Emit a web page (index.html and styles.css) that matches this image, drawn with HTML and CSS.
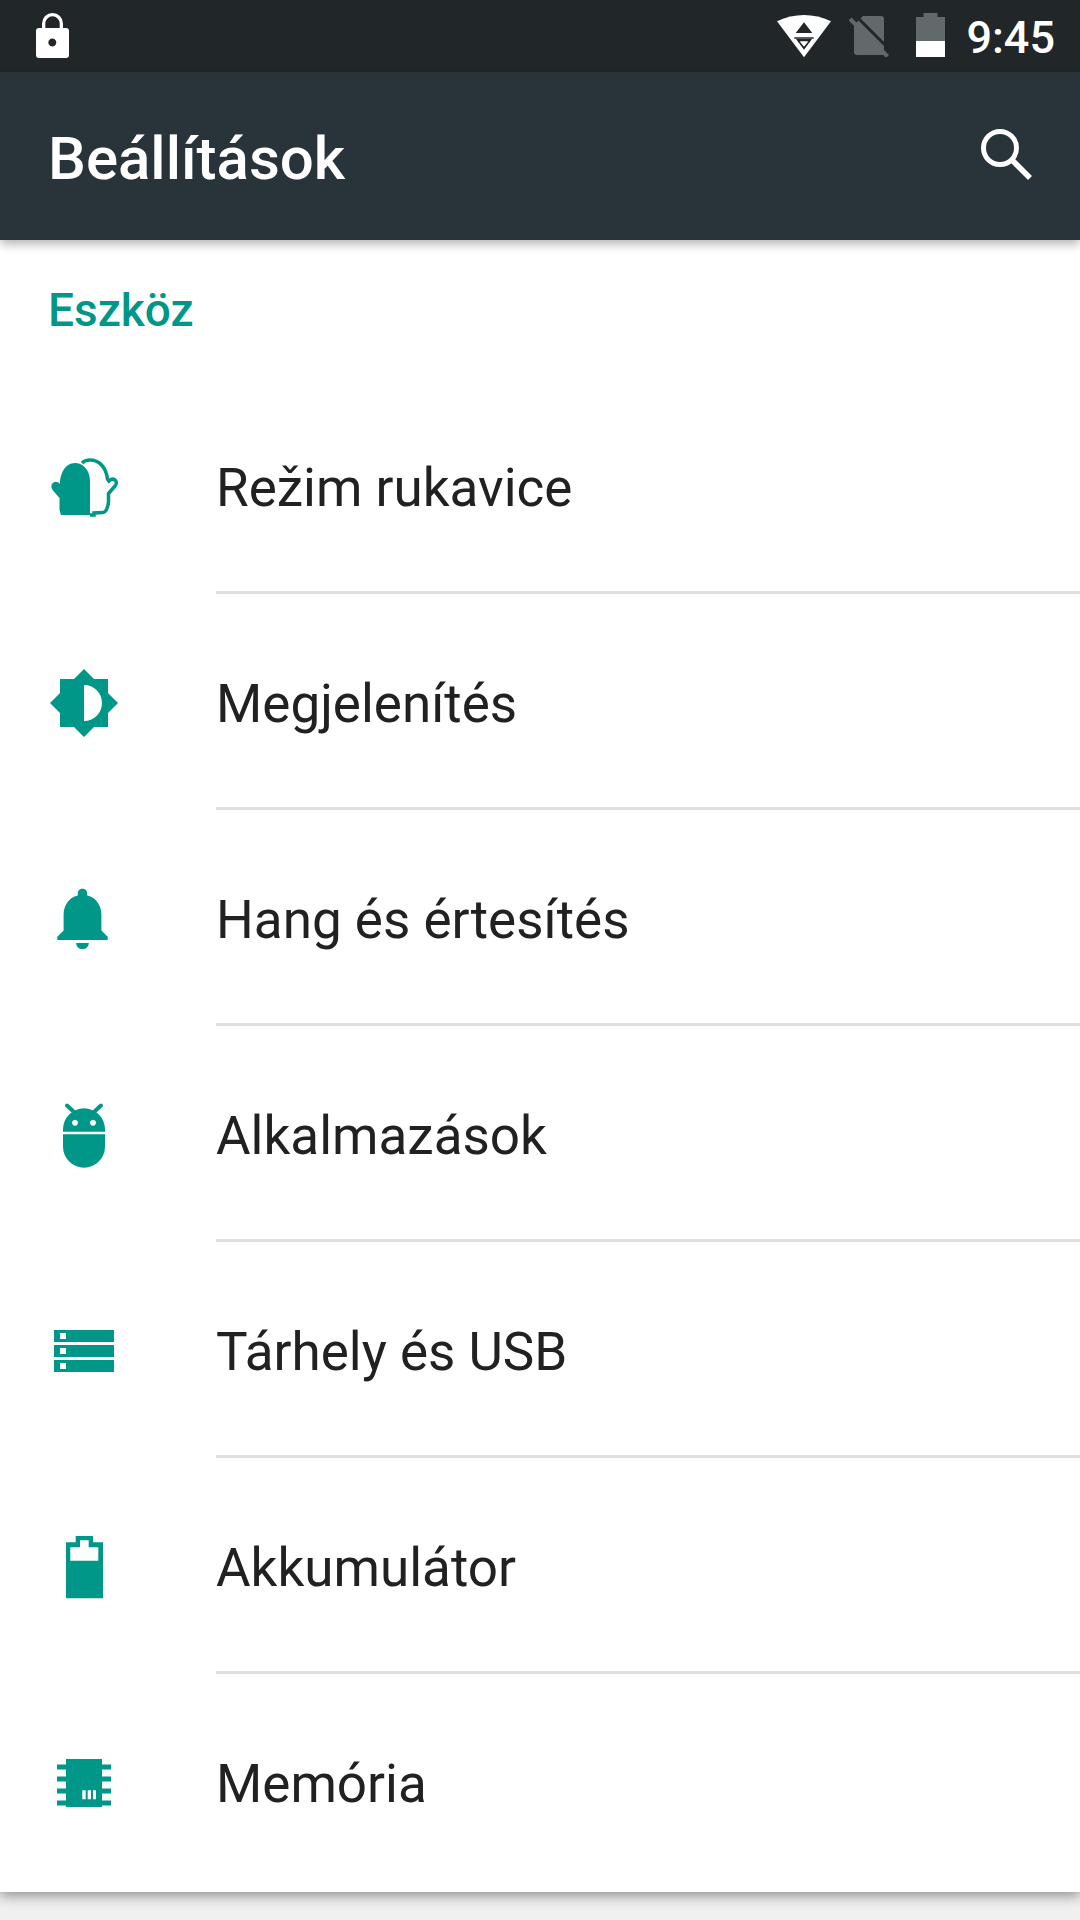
FILE: index.html
```html
<!DOCTYPE html>
<html lang="hu">
<head>
<meta charset="utf-8">
<title>Beállítások</title>
<link rel="stylesheet" href="styles.css">
</head>
<body>
<div class="phone">
  <header class="statusbar">
    <svg class="ic-lock" viewBox="0 0 33 45"><path fill="#fff" fill-rule="evenodd" d="M6 15V10.500a10.500 10.500 0 0 1 21 0V15h3a3 3 0 0 1 3 3v24a3 3 0 0 1-3 3H3a3 3 0 0 1-3-3V18a3 3 0 0 1 3-3zM9.300 15h14.400V10.500a7.200 7.200 0 0 0-14.400 0zM16.300 25.600a4 4 0 1 0 .01 0z"/></svg>
    <div class="status-right">
      <svg class="ic-wifi" viewBox="0 0 54 45"><path fill="#fff" d="M0 8.300Q27-4.300 54 8.300L27 44.300z"/><path fill="#212629" d="M27 9.300l8.300 10.700H18.700zM17.300 24.300h19.400v1.500H17.300zM19 26h16L27 36.700zM23 28.500l4 5 4-5z"/><path fill="#fff" d="M23 28.500h8L27 33.500z"/></svg>
      <svg class="ic-sim" viewBox="0 0 42 44"><path fill="#63686b" d="M14 3h18a3 3 0 0 1 3 3v33a3 3 0 0 1-3 3H8a3 3 0 0 1-3-3V12z"/><path stroke="#212629" stroke-width="3" d="M3-1L44 40"/><path stroke="#63686b" stroke-width="4" d="M1 6L38.500 43.500"/></svg>
      <svg class="ic-batt" viewBox="0 0 29 44"><path fill="#63686b" d="M7.500 0h14v4H29v24H0V4h7.500z"/><path fill="#fff" d="M0 28h29v16H0z"/></svg>
      <span class="clock">9:45</span>
    </div>
  </header>
  <div class="appbar">
    <h1 class="appbar-title">Beállítások</h1>
    <svg class="ic-search" viewBox="0 0 54 54"><circle cx="22" cy="22" r="16.500" fill="none" stroke="#fff" stroke-width="5"/><path d="M33 33L52 52" stroke="#fff" stroke-width="5.500" fill="none"/></svg>
  </div>
  <main class="content">
    <h2 class="section">Eszköz</h2>
    <ul class="list">
      <li class="row">
        <svg class="icon" viewBox="0 0 72 72"><path class="teal" d="M13 66L11.500 61V49L5 41.500C2.500 38.500 3 35 5.500 33.500C8 32 10 33 12 35C12 25 17 14 27 14C35 14 42 21 42 32V66z"/><path fill="none" stroke="#009688" stroke-width="3.500" d="M34 14C37 11 40 11 42 11C51 11 58 18 59.500 30L61 32C63 30 65 29.500 67 31C69 33 68.500 35.500 67 37L60.500 44.500V53C60 58 58 63.500 55 63.500L46 64V66H42"/></svg>
        <span class="label">Režim rukavice</span>
      </li>
      <li class="row">
        <svg class="icon" viewBox="0 0 72 72"><path class="teal" fill-rule="evenodd" d="M36 4l10 10h14v14l10 10-10 10v14H46L36 72 26 62H12V48L2 38l10-10V14h14zM36 20v36a18 18 0 0 0 0-36z"/></svg>
        <span class="label">Megjelenítés</span>
      </li>
      <li class="row">
        <svg class="icon" viewBox="0 0 72 72"><path class="teal" transform="translate(-3.300 0) scale(3.150 3.100)" d="M12 22c1.100 0 2-.9 2-2h-4c0 1.100.89 2 2 2zm6-6v-5c0-3.070-1.640-5.640-4.500-6.320V4c0-.83-.67-1.500-1.500-1.500s-1.500.67-1.500 1.500v.68C7.630 5.360 6 7.920 6 11v5l-2 2v1h16v-1l-2-2z"/></svg>
        <span class="label">Hang és értesítés</span>
      </li>
      <li class="row">
        <svg class="icon" viewBox="0 0 72 72"><path class="teal" fill-rule="evenodd" d="M15 34.700V32.300a21 21 0 0 1 42 0v2.400zM27 22.700a3 3 0 1 0 .01 0zM45 22.700a3 3 0 1 0 .01 0zM15 37.300h42v12.400a21 21 0 0 1-42 0z"/><path fill="none" stroke="#009688" stroke-width="4" stroke-linecap="round" d="M19 8.500l7 6.500M53 8.500l-7 6.500"/></svg>
        <span class="label">Alkalmazások</span>
      </li>
      <li class="row">
        <svg class="icon" viewBox="0 0 72 72"><path class="teal" fill-rule="evenodd" d="M6 17h60v12H6zM12 20v6h6v-6zM6 32h60v12H6zM12 35v6h6v-6zM6 47h60v12H6zM12 50v6h6v-6z"/></svg>
        <span class="label">Tárhely és USB</span>
      </li>
      <li class="row">
        <svg class="icon" viewBox="0 0 72 72"><path class="teal" fill-rule="evenodd" d="M27.700 7H45v6.300h10v56H18v-56h9.700zM32 11.300v7H22.300v13.400h28V18.300H40.700v-7z"/></svg>
        <span class="label">Akkumulátor</span>
      </li>
      <li class="row">
        <svg class="icon" viewBox="0 0 72 72"><path class="teal" fill-rule="evenodd" d="M18 14h36v5.500h9v5h-9v7h9v5h-9v7h9v5h-9v7h9v5h-9v1.500H18v-1.500H9v-5h9v-7H9v-5h9v-7H9v-5h9v-7H9v-5h9zM34.300 45.300v9h3.400v-9zM39.700 45.300v9H43v-9zM45 45.300v9h3v-9z"/></svg>
        <span class="label">Memória</span>
      </li>
    </ul>
  </main>
  <div class="footer-strip"></div>
</div>
</body>
</html>
```
FILE: styles.css
```css
* { box-sizing: border-box; }
html, body { margin: 0; padding: 0; }
body { width: 1080px; height: 1920px; overflow: hidden; background: #f0f0f0; font-family: Roboto, "Noto Sans", sans-serif; }
.phone { width: 1080px; height: 1920px; display: flex; flex-direction: column; }
.statusbar { height: 72px; flex: none; background: #212629; display: flex; align-items: flex-start; justify-content: space-between; padding: 13px 25px 0 36px; }
.ic-lock { width: 33px; height: 45px; display: block; }
.status-right { display: flex; align-items: flex-start; }
.ic-wifi { width: 54px; height: 45px; display: block; }
.ic-sim { width: 42px; height: 44px; margin-left: 18px; display: block; }
.ic-batt { width: 29px; height: 44px; margin-left: 25px; display: block; }
.clock { margin-left: 21px; color: #fff; font-size: 45px; font-weight: 500; line-height: 50px; height: 44px; }
.appbar { height: 168px; flex: none; background: #29333a; display: flex; align-items: center; justify-content: space-between; padding: 0 48px; position: relative; z-index: 2; box-shadow: 0 4px 10px rgba(0,0,0,.3); }
.appbar-title { margin: 6px 0 0; color: #fff; font-size: 60px; font-weight: 500; line-height: 72px; }
.ic-search { width: 54px; height: 54px; display: block; margin-bottom: 6px; }
.content { flex: none; height: 1652px; background: #fff; display: flex; flex-direction: column; position: relative; z-index: 1; box-shadow: 0 4px 12px rgba(0,0,0,.4); }
.section { margin: 0; padding: 45px 48px 0; height: 137px; color: #009688; font-size: 46px; font-weight: 500; line-height: 50px; }
.list { list-style: none; margin: 0; padding: 0; }
.row { height: 216px; display: flex; align-items: center; padding-left: 48px; position: relative; }
.row + .row::before { content: ""; position: absolute; left: 216px; right: 0; top: -2px; height: 3px; background: #e0e0e0; }
.icon { width: 72px; height: 72px; flex: none; display: block; }
.teal { fill: #009688; }
.label { margin: 6px 0 0 96px; color: #212121; font-size: 53px; line-height: 60px; }
.footer-strip { flex: 1; }
```
